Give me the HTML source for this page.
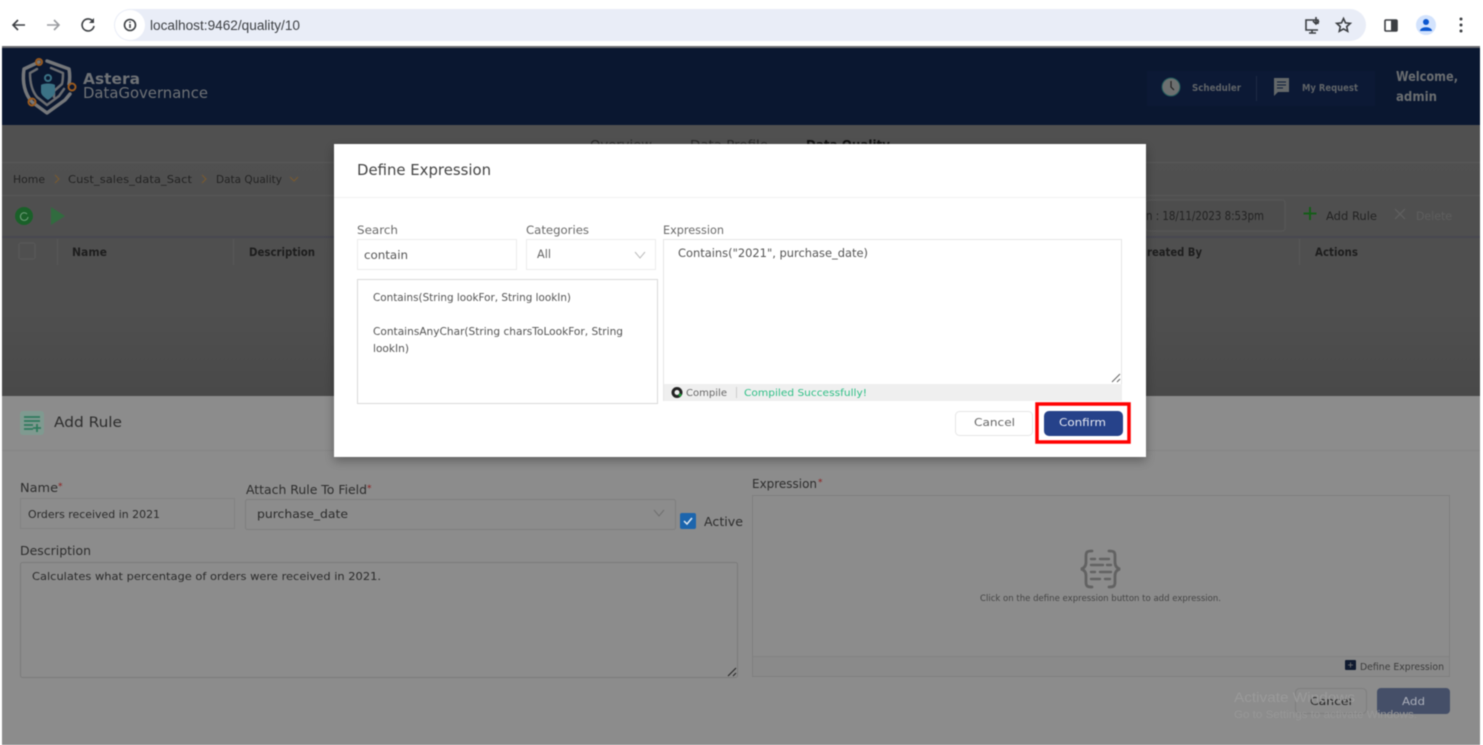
<!DOCTYPE html>
<html><head><meta charset="utf-8"><title>Define Expression</title>
<style>
html,body{margin:0;padding:0;background:#fff;width:1483px;height:745px;overflow:hidden}
svg{display:block;position:absolute;left:0;top:0}
text{font-family:"DejaVu Sans","Liberation Sans",sans-serif;white-space:pre}
.l{font-family:"Liberation Sans",sans-serif}
</style></head><body>
<svg width="1483" height="745" viewBox="0 0 1483 745" xmlns="http://www.w3.org/2000/svg">
<defs>
<filter id="b" x="-5%" y="-5%" width="110%" height="110%" color-interpolation-filters="sRGB"><feGaussianBlur stdDeviation="0.45"/></filter>
<filter id="s" x="-5%" y="-10%" width="110%" height="120%" color-interpolation-filters="sRGB"><feGaussianBlur stdDeviation="5"/></filter>
<linearGradient id="g" x1="0" y1="0" x2="0" y2="1"><stop offset="0" stop-color="#505050"/><stop offset="0.7" stop-color="#4f4f4f"/><stop offset="1" stop-color="#494949"/></linearGradient>
</defs>
<g filter="url(#b)">
<!-- browser -->
<rect width="1483" height="745" fill="#fff"/>
<rect x="114" y="9" width="1252" height="32" rx="16" fill="#e9edf7"/>
<circle cx="130" cy="25" r="15" fill="#fff"/>
<g fill="none" stroke="#3c3f43" stroke-width="1.6">
<path d="M25 25H13M18 20l-5 5 5 5"/>
<path d="M47 25h12M54 20l5 5-5 5" stroke="#9a9ca0"/>
<path d="M93 21.500a6 6 0 1 0 1 4.500"/>
<circle cx="130" cy="25" r="5.500"/><path d="M130 24v4M130 21.500v1.200"/>
<path d="M1318 24v-4h-12v10h12M1309 33h7M1312 30v3"/><path d="M1316 17v7M1313 21l3 3 3-3"/>
<path d="M1343.500 18.500l2 4.400 4.800.5-3.600 3.200 1 4.700-4.200-2.400-4.200 2.400 1-4.700-3.600-3.200 4.800-.5z"/>
<rect x="1385" y="20" width="12" height="11" rx="1"/>
</g>
<path d="M94 18v5h-5z" fill="#3c3f43"/>
<rect x="1391" y="20" width="6" height="11" fill="#3c3f43"/>
<circle cx="1426" cy="25" r="10" fill="#d3e3fd"/>
<circle cx="1426" cy="22" r="3" fill="#0b57d0"/><path d="M1420 31c0-5 12-5 12 0z" fill="#0b57d0"/>
<circle cx="1461" cy="19" r="1.500" fill="#3c3f43"/><circle cx="1461" cy="25" r="1.500" fill="#3c3f43"/><circle cx="1461" cy="31" r="1.500" fill="#3c3f43"/>
<text x="150" y="30" font-size="13.500" fill="#3c3f43" class="l" textLength="150" lengthAdjust="spacingAndGlyphs">localhost:9462/quality/10</text>

<!-- page -->
<rect x="2" y="46" width="1478" height="2" fill="#6a6c70"/>
<rect x="2" y="48" width="1478" height="77" fill="#0a1730"/>
<rect x="2" y="125" width="1478" height="271" fill="url(#g)"/>
<rect x="2" y="396" width="1478" height="349" fill="#8c8c8c"/>
<!-- logo -->
<g fill="none" stroke-linecap="round" stroke-linejoin="round">
<path d="M39 62l-15 7c-2 14 1 25 8 33l15 11 18-13 5-6M47 61l22 8c1 6 1 10 0 15" stroke="#75777a" stroke-width="3.500"/>
<path d="M37 69l-7 4c0 10 2 18 7 24l10 8 12-9 5-7M51 68l12 5c0 4 0 7-1 11l-8 7v6" stroke="#6a6c70" stroke-width="2.500"/>
<circle cx="39" cy="62" r="3" stroke="#9a5a1e" stroke-width="2"/><circle cx="72" cy="87" r="3.500" stroke="#9a5a1e" stroke-width="2"/><circle cx="32" cy="102" r="3.500" stroke="#9a5a1e" stroke-width="2"/>
<circle cx="48" cy="78" r="3" stroke="#3b7285" stroke-width="2"/>
</g>
<path d="M41 85c2-2 12-2 14 0v7c0 3-4 6-7 8-3-2-7-5-7-8z" fill="#3b7285"/>
<text x="83" y="84" font-size="15" font-weight="bold" fill="#6f7276" textLength="57" lengthAdjust="spacingAndGlyphs">Astera</text>
<text x="83" y="98" font-size="15.500" fill="#6f7276" textLength="125" lengthAdjust="spacingAndGlyphs">DataGovernance</text>
<rect x="1147" y="71" width="228" height="35" fill="#0c1935"/>
<circle cx="1171" cy="87" r="9" fill="#6d7070" stroke="#1f5a5a" stroke-width="1"/><path d="M1171 81v6l3 3" stroke="#222" stroke-width="1.200" fill="none"/>
<text x="1192" y="91" font-size="10" font-weight="bold" fill="#5f6367" textLength="49" lengthAdjust="spacingAndGlyphs">Scheduler</text>
<rect x="1256" y="76" width="1" height="25" fill="#1d2a45"/>
<path d="M1274 78h15v14h-11l-4 4z" fill="#64686a"/><path d="M1277 82h9M1277 85h9M1277 88h6" stroke="#0e1c3a" stroke-width="1"/>
<text x="1302" y="91" font-size="10" font-weight="bold" fill="#5f6367" textLength="56" lengthAdjust="spacingAndGlyphs">My Request</text>
<text x="1396" y="81" font-size="13" font-weight="bold" fill="#6a6d70" textLength="62" lengthAdjust="spacingAndGlyphs">Welcome,</text>
<text x="1396" y="101" font-size="13" font-weight="bold" fill="#6a6d70" textLength="41" lengthAdjust="spacingAndGlyphs">admin</text>

<text x="590" y="149" font-size="12.500" fill="#2a2a2a" textLength="62" lengthAdjust="spacingAndGlyphs">Overview</text>
<text x="690" y="149" font-size="12.500" fill="#2a2a2a" textLength="78" lengthAdjust="spacingAndGlyphs">Data Profile</text>
<text x="806" y="149" font-size="12.500" font-weight="bold" fill="#111" textLength="84" lengthAdjust="spacingAndGlyphs">Data Quality</text>

<rect x="2" y="162" width="1478" height="1" fill="#585858"/>
<rect x="2" y="195" width="1478" height="1" fill="#585858"/>
<text x="13" y="183" font-size="10.500" fill="#222" textLength="32" lengthAdjust="spacingAndGlyphs">Home</text>
<path d="M55 175l4 4-4 4" stroke="#7a5a2e" fill="none"/>
<text x="68" y="183" font-size="10.500" fill="#222" textLength="124" lengthAdjust="spacingAndGlyphs">Cust_sales_data_Sact</text>
<path d="M202 175l4 4-4 4" stroke="#7a5a2e" fill="none"/>
<text x="216" y="183" font-size="10.500" fill="#222" textLength="66" lengthAdjust="spacingAndGlyphs">Data Quality</text>
<path d="M290 177l4 4 4-4" stroke="#7a5a2e" fill="none"/>

<circle cx="24" cy="216" r="9" fill="#1a6029"/><path d="M27 214a3.800 3.800 0 1 0 1 3" stroke="#6f9f7a" fill="none"/>
<path d="M51 207l14 9-14 9z" fill="#316b3f"/>

<rect x="1146" y="200" width="139" height="31" rx="3" fill="#4d4d4d" stroke="#585858"/>
<text x="1146" y="220" font-size="12" fill="#232323" textLength="118" lengthAdjust="spacingAndGlyphs">n : 18/11/2023 8:53pm</text>
<path d="M1310 207v13M1303.500 213.500h13" stroke="#155c18" stroke-width="2"/>
<text x="1326" y="220" font-size="11.500" fill="#232323" textLength="51" lengthAdjust="spacingAndGlyphs">Add Rule</text>
<path d="M1395 209l10 10M1405 209l-10 10" stroke="#606060" stroke-width="1.200"/>
<text x="1416" y="220" font-size="11.500" fill="#5e5e5e" textLength="36" lengthAdjust="spacingAndGlyphs">Delete</text>

<rect x="2" y="236" width="1478" height="2" fill="#474750"/>
<rect x="19" y="243" width="16" height="16" rx="2" fill="#4f4f4f" stroke="#5a5a5a"/>
<rect x="57" y="239" width="1" height="26" fill="#575757"/><rect x="233" y="239" width="1" height="26" fill="#575757"/><rect x="1299" y="239" width="1" height="26" fill="#575757"/>
<text x="72" y="256" font-size="11.500" font-weight="bold" fill="#1d1d1d" textLength="35" lengthAdjust="spacingAndGlyphs">Name</text>
<text x="249" y="256" font-size="11.500" font-weight="bold" fill="#1d1d1d" textLength="66" lengthAdjust="spacingAndGlyphs">Description</text>
<text x="1147" y="256" font-size="11.500" font-weight="bold" fill="#1d1d1d" textLength="55" lengthAdjust="spacingAndGlyphs">reated By</text>
<text x="1315" y="256" font-size="11.500" font-weight="bold" fill="#1d1d1d" textLength="43" lengthAdjust="spacingAndGlyphs">Actions</text>

<!-- Add rule panel -->
<rect x="2" y="450" width="1478" height="1" fill="#858585"/>
<rect x="20" y="411" width="24" height="24" rx="3" fill="#7f9a90"/>
<path d="M24 417h16M24 421h16M24 425h9M24 429h9M37 424v8M33 428h8" stroke="#2f7a5c" stroke-width="1.800"/>
<text x="54" y="427" font-size="14.500" fill="#2d2d2d" textLength="68" lengthAdjust="spacingAndGlyphs">Add Rule</text>
<text x="20" y="492" font-size="12" fill="#2d2d2d" textLength="38" lengthAdjust="spacingAndGlyphs">Name</text><text x="58" y="489" font-size="9" fill="#8f2020">*</text>
<rect x="20.500" y="498.500" width="214" height="30" fill="#8c8c8c" stroke="#828282"/>
<text x="28" y="518" font-size="11" fill="#2b2b2b" textLength="132" lengthAdjust="spacingAndGlyphs">Orders received in 2021</text>
<text x="246" y="494" font-size="12" fill="#2d2d2d" textLength="121" lengthAdjust="spacingAndGlyphs">Attach Rule To Field</text><text x="367" y="491" font-size="9" fill="#8f2020">*</text>
<rect x="245.500" y="499.500" width="430" height="30" rx="2" fill="#8c8c8c" stroke="#7e7e7e"/>
<text x="257" y="518" font-size="11.500" fill="#2b2b2b" textLength="91" lengthAdjust="spacingAndGlyphs">purchase_date</text>
<path d="M654 510l5 6 5-6" stroke="#6f6f6f" fill="none"/>
<rect x="680" y="513" width="16" height="16" rx="2" fill="#1c65ad"/>
<path d="M684 521l3 3 5-6" stroke="#dfe8f2" stroke-width="1.500" fill="none"/>
<text x="704" y="526" font-size="12" fill="#2d2d2d" textLength="39" lengthAdjust="spacingAndGlyphs">Active</text>
<text x="20" y="555" font-size="12" fill="#2d2d2d" textLength="71" lengthAdjust="spacingAndGlyphs">Description</text>
<rect x="20.500" y="562.500" width="717" height="115" rx="2" fill="#8c8c8c" stroke="#7b7b7b"/>
<text x="32" y="580" font-size="11" fill="#2b2b2b" textLength="349" lengthAdjust="spacingAndGlyphs">Calculates what percentage of orders were received in 2021.</text>
<path d="M728 676l8-8M733 676l3-3" stroke="#222"/>

<text x="752" y="488" font-size="12" fill="#2d2d2d" textLength="65" lengthAdjust="spacingAndGlyphs">Expression</text><text x="818" y="485" font-size="9" fill="#8f2020">*</text>
<rect x="752.500" y="495.500" width="697" height="181" fill="#8c8c8c" stroke="#7f7f7f"/>
<rect x="753" y="656" width="696" height="1" fill="#838383"/>
<rect x="753" y="657" width="696" height="19" fill="#8a8a8a"/>
<g fill="none" stroke="#626262" stroke-width="2.800" stroke-linecap="round">
<path d="M1092 551c-5 0-6 1-6 5v6c0 3-1 6-5 7 4 1 5 4 5 7v6c0 4 1 5 6 5"/>
<path d="M1109 551c5 0 6 1 6 5v6c0 3 1 6 5 7-4 1-5 4-5 7v6c0 4-1 5-6 5"/>
<path d="M1091 559h4M1100 559h9M1091 565h12M1107 565h4M1091 572h4M1100 572h11M1091 579h9M1105 579h5" stroke-width="2.400"/>
</g>
<text x="980" y="601" font-size="9" fill="#454545" textLength="241" lengthAdjust="spacingAndGlyphs">Click on the define expression button to add expression.</text>
<rect x="1345" y="660" width="11" height="10" rx="1" fill="#0f1a30"/><path d="M1350.500 662.500v5M1348 665h5" stroke="#777" stroke-width=".8"/>
<text x="1360" y="670" font-size="9.500" fill="#3c3c3c" textLength="84" lengthAdjust="spacingAndGlyphs">Define Expression</text>
<rect x="1295.500" y="688.500" width="71" height="25" rx="4" fill="#8c8c8c" stroke="#7e7e7e"/>
<text x="1310" y="705" font-size="11" fill="#252525" textLength="42" lengthAdjust="spacingAndGlyphs">Cancel</text>
<rect x="1377" y="688" width="73" height="26" rx="4" fill="#454f68"/>
<text x="1402" y="705" font-size="11" fill="#a9adb8" textLength="23" lengthAdjust="spacingAndGlyphs">Add</text>
<text x="1234" y="702" font-size="14" class="l" fill="#9a9a9a" textLength="121" lengthAdjust="spacingAndGlyphs">Activate Windows</text>
<text x="1234" y="718" font-size="11" class="l" fill="#979797" textLength="183" lengthAdjust="spacingAndGlyphs">Go to Settings to activate Windows.</text>

<!-- Modal -->
<rect x="334" y="148" width="812" height="313" fill="#000" opacity=".3" filter="url(#s)"/>
<rect x="334" y="144" width="812" height="313" fill="#fff"/>
<rect x="334" y="197" width="812" height="1" fill="#f1f1f1"/>
<text x="357" y="175" font-size="15" fill="#444" textLength="134" lengthAdjust="spacingAndGlyphs">Define Expression</text>
<text x="357" y="234" font-size="11.500" fill="#6a6a6a" textLength="41" lengthAdjust="spacingAndGlyphs">Search</text>
<rect x="357.500" y="239.500" width="159" height="30" fill="#fff" stroke="#ececec"/>
<text x="364" y="259" font-size="11.500" fill="#555" textLength="44" lengthAdjust="spacingAndGlyphs">contain</text>
<text x="526" y="234" font-size="11.500" fill="#6a6a6a" textLength="63" lengthAdjust="spacingAndGlyphs">Categories</text>
<rect x="526.500" y="239.500" width="129" height="30" fill="#fff" stroke="#ececec"/>
<text x="537" y="258" font-size="11.500" fill="#666" textLength="14" lengthAdjust="spacingAndGlyphs">All</text>
<path d="M635 252l5 6 5-6" stroke="#bbb" fill="none"/>
<rect x="357.500" y="279.500" width="300" height="124" fill="#fff" stroke="#d9d9d9"/>
<text x="373" y="301" font-size="10.500" fill="#555" textLength="198" lengthAdjust="spacingAndGlyphs">Contains(String lookFor, String lookIn)</text>
<text x="373" y="335" font-size="10.500" fill="#555" textLength="250" lengthAdjust="spacingAndGlyphs">ContainsAnyChar(String charsToLookFor, String</text>
<text x="373" y="352" font-size="10.500" fill="#555" textLength="36" lengthAdjust="spacingAndGlyphs">lookIn)</text>
<text x="663" y="234" font-size="11.500" fill="#6a6a6a" textLength="61" lengthAdjust="spacingAndGlyphs">Expression</text>
<rect x="663.500" y="239.500" width="458" height="161" fill="#fff" stroke="#e6e6e6"/>
<text x="678" y="257" font-size="11.500" fill="#555" textLength="190" lengthAdjust="spacingAndGlyphs">Contains("2021", purchase_date)</text>
<path d="M1112 382l8-8M1117 382l3-3" stroke="#666"/>
<rect x="664" y="384" width="458" height="17" fill="#efefef"/>
<circle cx="677" cy="392.500" r="4" fill="none" stroke="#222" stroke-width="3"/><circle cx="680" cy="395" r="1.500" fill="#1c9a35"/>
<text x="686" y="396" font-size="10" fill="#666" textLength="41" lengthAdjust="spacingAndGlyphs">Compile</text>
<rect x="736" y="387" width="1" height="11" fill="#ccc"/>
<text x="744" y="396" font-size="10" fill="#2fbf86" textLength="123" lengthAdjust="spacingAndGlyphs">Compiled Successfully!</text>
<rect x="955.500" y="411.500" width="77" height="24" rx="4" fill="#fff" stroke="#e6e6e6"/>
<text x="974" y="426" font-size="11" fill="#666" textLength="41" lengthAdjust="spacingAndGlyphs">Cancel</text>
<rect x="1037" y="404" width="92" height="38" fill="none" stroke="#f00" stroke-width="3.500"/>
<rect x="1044" y="411" width="79" height="25" rx="5" fill="#26428a"/>
<text x="1059" y="426" font-size="11" fill="#e6e9f2" textLength="47" lengthAdjust="spacingAndGlyphs">Confirm</text>
</g>
</svg>
</body></html>
